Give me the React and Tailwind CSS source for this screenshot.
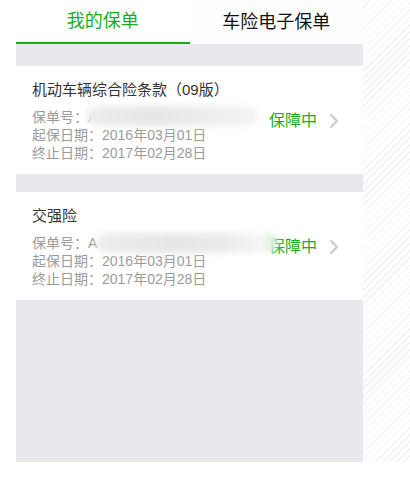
import React from 'react';

function Chevron() {
  return (
    <svg width="10" height="16" viewBox="0 0 10 16" fill="none">
      <path d="M2 2l6 6-6 6" stroke="#c7c7cc" strokeWidth="1.8" strokeLinecap="round" strokeLinejoin="round" />
    </svg>
  );
}

function PolicyCard({ title, start, end, blur, fill }) {
  return (
    <div className="relative bg-white pl-4 pr-6 pt-[14px] pb-3 flex items-center">
      <div className="flex-1">
        <div className="text-[15px] leading-5 text-[#333]">{title}</div>
        <div className="mt-2 text-[14px] leading-[18px] text-[#9b9b9b]">
          <div>保单号：A</div>
          <div>起保日期：{start}</div>
          <div>终止日期：{end}</div>
        </div>
      </div>
      <div className="flex items-center gap-3">
        <span className="text-[16px] text-[#1aad19]">保障中</span>
        <Chevron />
      </div>
      {/* redacted policy number */}
      <div className={blur}>
        <div className={fill} />
      </div>
    </div>
  );
}

export default function App() {
  return (
    <div className="min-h-[501px] bg-white font-['Liberation_Sans','Noto_Sans_CJK_SC',sans-serif] flex">
      <div className="ml-4 w-[347px] h-[462px] bg-[#e9e8ed] flex flex-col">
        <div className="bg-white flex h-[44px]">
          <div className="w-1/2 flex items-center justify-center text-[18px] text-[#1aad19] border-b-2 border-[#1aad19]">
            我的保单
          </div>
          <div className="w-1/2 flex items-center justify-center text-[18px] text-[#111] bg-[#fdfdfd]">
            车险电子保单
          </div>
        </div>
        <div className="mt-[22px] flex flex-col gap-[18px]">
          <PolicyCard
            title="机动车辆综合险条款（09版）"
            start="2016年03月01日"
            end="2017年02月28日"
            blur="absolute left-[70px] top-[40px] w-[172px] h-[20px] pointer-events-none"
            fill="h-full w-full rounded-full blur-[3px] bg-[linear-gradient(90deg,#eeeeee,#e6e6e6_40%,#ebebeb_60%,#f4f4f4)]"
          />
          <PolicyCard
            title="交强险"
            start="2016年03月01日"
            end="2017年02月28日"
            blur="absolute left-[80px] top-[41px] w-[182px] h-[20px] pointer-events-none"
            fill="h-full w-full rounded-full blur-[3px] bg-[linear-gradient(90deg,#eeeeee,#e6e6e6_40%,#ebebeb_70%,#f6f6f6_92%,#c8ecc8)]"
          />
        </div>
      </div>
      <div className="w-[47px] h-[462px] bg-[repeating-linear-gradient(-45deg,#ffffff_0px,#ffffff_4px,#f1f1f1_4px,#f1f1f1_5px)]" />
    </div>
  );
}
